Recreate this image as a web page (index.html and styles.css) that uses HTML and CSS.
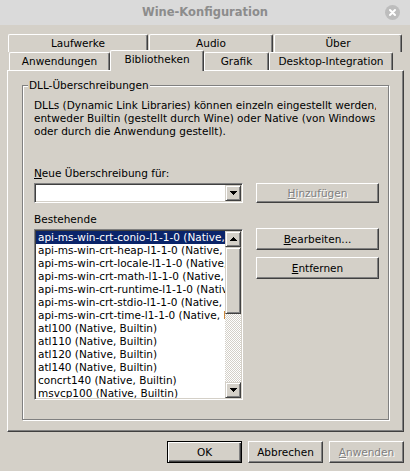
FILE: index.html
```html
<!DOCTYPE html>
<html lang="de">
<head>
<meta charset="utf-8">
<title>Wine-Konfiguration</title>
<link rel="stylesheet" href="styles.css">
</head>
<body>
<div class="titlebar">
  <span></span>
  <span class="title">Wine-Konfiguration</span>
  <span class="close">
    <svg width="15" height="15" viewBox="0 0 15 15"><circle cx="7.5" cy="7.5" r="7.5" fill="#bdbdbd"/><path d="M5 5L10 10M10 5L5 10" stroke="#fff" stroke-width="2" stroke-linecap="round"/></svg>
  </span>
</div>
<div class="main">
  <div class="tabs">
    <div class="tabrow back">
      <div class="tab t-laufwerke">Laufwerke</div>
      <div class="tab t-audio">Audio</div>
      <div class="tab t-ueber">Über</div>
    </div>
    <div class="tabrow front">
      <div class="tab t-anw">Anwendungen</div>
      <div class="tab t-bib selected">Bibliotheken</div>
      <div class="tab t-grafik">Grafik</div>
      <div class="tab t-desktop">Desktop-Integration</div>
    </div>
  </div>
  <div class="panel">
    <div class="group">
      <div class="legend">DLL-Überschreibungen</div>
      <p class="desc">DLLs (Dynamic Link Libraries) können einzeln eingestellt werden,<br>entweder Builtin (gestellt durch Wine) oder Native (von Windows<br>oder durch die Anwendung gestellt).</p>
      <div class="label first"><u>N</u>eue Überschreibung für:</div>
      <div class="row">
        <div class="combo">
          <div class="combo-field"></div>
          <div class="arrowbtn"><svg width="7" height="4" viewBox="0 0 7 4"><path d="M0 0h7v1h-1v1h-1v1h-1v1h-1v-1h-1v-1h-1v-1h-1z" fill="#000"/></svg></div>
        </div>
        <div class="btn side disabled"><u>H</u>inzufügen</div>
      </div>
      <div class="label">Bestehende</div>
      <div class="row">
        <div class="listbox">
          <ul class="items">
            <li class="sel">api-ms-win-crt-conio-l1-1-0 (Native, Builtin)</li>
            <li>api-ms-win-crt-heap-l1-1-0 (Native, Builtin)</li>
            <li>api-ms-win-crt-locale-l1-1-0 (Native, Builtin)</li>
            <li>api-ms-win-crt-math-l1-1-0 (Native, Builtin)</li>
            <li>api-ms-win-crt-runtime-l1-1-0 (Native, Builtin)</li>
            <li>api-ms-win-crt-stdio-l1-1-0 (Native, Builtin)</li>
            <li>api-ms-win-crt-time-l1-1-0 (Native, Builtin)</li>
            <li>atl100 (Native, Builtin)</li>
            <li>atl110 (Native, Builtin)</li>
            <li>atl120 (Native, Builtin)</li>
            <li>atl140 (Native, Builtin)</li>
            <li>concrt140 (Native, Builtin)</li>
            <li>msvcp100 (Native, Builtin)</li>
          </ul>
          <div class="scrollbar">
            <div class="arrowbtn sq"><svg width="7" height="4" viewBox="0 0 7 4"><path d="M3 0h1v1h1v1h1v1h1v1h-7v-1h1v-1h1v-1h1z" fill="#000"/></svg></div>
            <div class="thumb"></div>
            <div class="track"></div>
            <div class="arrowbtn sq"><svg width="7" height="4" viewBox="0 0 7 4"><path d="M0 0h7v1h-1v1h-1v1h-1v1h-1v-1h-1v-1h-1v-1h-1z" fill="#000"/></svg></div>
          </div>
        </div>
        <div class="sidebtns">
          <div class="btn side tall"><u>B</u>earbeiten...</div>
          <div class="btn side tall"><u>E</u>ntfernen</div>
        </div>
      </div>
    </div>
  </div>
  <div class="footer">
    <div class="btn foot default">OK</div>
    <div class="btn foot">Abbrechen</div>
    <div class="btn foot disabled"><u>A</u>nwenden</div>
  </div>
</div>
</body>
</html>
```
FILE: styles.css
```css
* { box-sizing: border-box; }
html, body { margin: 0; padding: 0; }
body {
  width: 410px;
  height: 471px;
  overflow: hidden;
  background: #d4d0c8;
  font-family: "DejaVu Sans", Verdana, sans-serif;
  font-size: 10.5px;
  color: #000;
}
u { text-decoration: underline; text-underline-offset: 1px; }

.titlebar {
  height: 25px;
  background: #dadada;
  display: grid;
  grid-template-columns: 1fr auto 1fr;
  align-items: center;
}
.title {
  font-weight: bold;
  font-size: 11.5px;
  color: #8c8c8c;
  line-height: 25px;
}
.close {
  justify-self: end;
  margin-right: 10px;
  height: 15px;
}
.close svg { display: block; }

.main { padding: 9px 6px 0 7px; }

.tabrow { display: flex; align-items: flex-start; height: 18px; }
.tabrow.back { padding-left: 1px; gap: 1px; }
.tabrow.front { padding-left: 2px; }
.tab {
  height: 18px;
  line-height: 17px;
  text-align: center;
  background: #d4d0c8;
  border-top: 1px solid #fff;
  border-left: 1px solid #fff;
  border-right: 1px solid #404040;
  box-shadow: inset -1px 0 #808080;
  border-radius: 2px 2px 0 0;
  white-space: nowrap;
}
.t-laufwerke { width: 140px; }
.t-audio { width: 124px; }
.t-ueber { width: 128px; }
.t-anw { width: 101px; }
.t-bib { width: 94px; }
.t-grafik { width: 65px; }
.t-desktop { width: 124px; }
.tab.selected {
  height: 21px;
  margin-top: -2px;
  margin-bottom: -1px;
  position: relative;
  z-index: 1;
}

.panel {
  width: 397px;
  height: 362px;
  border-top: 1px solid #fff;
  border-left: 1px solid #fff;
  border-right: 1px solid #404040;
  border-bottom: 1px solid #404040;
  box-shadow: inset -1px -1px #808080;
  padding: 14px 14px 11px 14px;
}

.group {
  height: 335px;
  border: 1px solid #808080;
  box-shadow: inset 1px 1px #fff, 1px 1px #fff;
  padding: 0 7px 0 11px;
}
.legend {
  width: max-content;
  margin: -7px 0 0 -6px;
  padding: 0 1px;
  line-height: 13px;
  height: 13px;
  background: #d4d0c8;
}
.desc {
  margin: 7px 0 0 0;
  width: 342px;
  line-height: 13px;
  white-space: nowrap;
  overflow: hidden;
}
.label { line-height: 13px; margin-top: 10px; }
.label.first { margin-top: 29px; }

.row { display: flex; align-items: flex-start; gap: 13px; margin-top: 3px; }

.combo {
  width: 209px;
  height: 20px;
  display: flex;
  background: #fff;
  border: 1px solid;
  border-color: #808080 #fff #fff #808080;
  box-shadow: inset 1px 1px #404040, inset -1px -1px #d4d0c8;
  padding: 1px;
}
.combo-field { flex: 1; }

.arrowbtn {
  width: 16px;
  height: 16px;
  display: flex;
  align-items: center;
  justify-content: center;
  background: #d4d0c8;
  border: 1px solid;
  border-color: #d4d0c8 #404040 #404040 #d4d0c8;
  box-shadow: inset 1px 1px #fff, inset -1px -1px #808080;
  flex: none;
}
.arrowbtn svg { display: block; }

.btn {
  display: flex;
  align-items: center;
  justify-content: center;
  background: #d4d0c8;
  border: 1px solid;
  border-color: #fff #404040 #404040 #fff;
  box-shadow: inset -1px -1px #808080;
  white-space: nowrap;
}
.btn.side { width: 123px; height: 20px; }
.btn.side.tall { height: 22px; }
.btn.disabled { color: #808080; text-shadow: 1px 1px 0 #fff; }
.btn.default {
  border-color: #000;
  box-shadow: inset 1px 1px #fff, inset -1px -1px #404040, inset -2px -2px #808080;
}

.listbox {
  width: 209px;
  height: 171px;
  display: flex;
  background: #fff;
  border: 1px solid;
  border-color: #808080 #fff #fff #808080;
  box-shadow: inset 1px 1px #404040, inset -1px -1px #d4d0c8;
  padding: 1px;
}
.items {
  list-style: none;
  margin: 0;
  padding: 0;
  flex: 1;
  overflow: hidden;
}
.items li {
  height: 13px;
  line-height: 13px;
  padding-left: 2px;
  white-space: nowrap;
  overflow: hidden;
}
.items li.sel { background: #0a246a; color: #fff; }

.scrollbar {
  width: 16px;
  display: flex;
  flex-direction: column;
  background: repeating-conic-gradient(#fff 0 25%, #d4d0c8 0 50%) 0 0 / 2px 2px;
}
.thumb {
  height: 67px;
  background: #d4d0c8;
  border: 1px solid;
  border-color: #d4d0c8 #404040 #404040 #d4d0c8;
  box-shadow: inset 1px 1px #fff, inset -1px -1px #808080;
}
.track { flex: 1; }

.sidebtns { display: flex; flex-direction: column; gap: 7px; margin-top: -1px; }

.footer {
  display: flex;
  justify-content: flex-end;
  gap: 6px;
  margin-top: 9px;
}
.btn.foot { width: 75px; height: 22px; }
```
